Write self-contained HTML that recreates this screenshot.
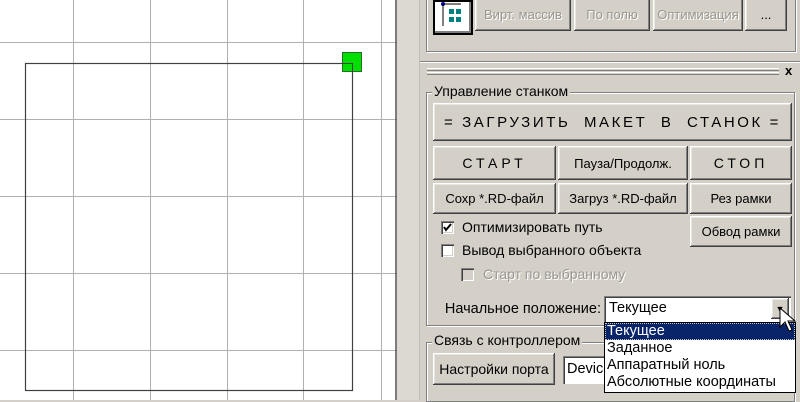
<!DOCTYPE html>
<html><head><meta charset="utf-8"><style>
*{margin:0;padding:0;box-sizing:border-box}
body{width:800px;height:400px;overflow:hidden;background:#d4d0c8;position:relative;font-family:"Liberation Sans","DejaVu Sans",sans-serif;font-size:14px;color:#000}
.a{position:absolute;white-space:nowrap}
.btn{position:absolute;background:#d4d0c8;box-shadow:inset -1px -1px #404040,inset 1px 1px #fff,inset -2px -2px #808080,inset 2px 2px #e8e6e0;display:flex;align-items:center;justify-content:center;white-space:nowrap;font-size:13px}
.dis{color:#9a978f;text-shadow:1px 1px #fff}
.grp{position:absolute;border:1px solid #808080;box-shadow:1px 1px #fff,inset 1px 1px #fff}
.lbl{position:absolute;background:#d4d0c8;padding:0 2px;font-size:14px}
.cb{position:absolute;width:13px;height:13px;background:#fff;box-shadow:inset 1px 1px #808080,inset 2px 2px #404040,inset -1px -1px #fff,inset -2px -2px #d4d0c8}
.sp{letter-spacing:4px;font-size:14px}
.li{position:absolute;left:607px;line-height:17px;font-size:14.5px}
</style></head><body>
<svg class="a" style="left:0;top:0" width="397" height="400">
<rect width="397" height="400" fill="#fff"/>
<g stroke="#b0b0b0" stroke-width="1">
<line x1="73.5" y1="0" x2="73.5" y2="400"/><line x1="150.5" y1="0" x2="150.5" y2="400"/><line x1="227.5" y1="0" x2="227.5" y2="400"/><line x1="303.5" y1="0" x2="303.5" y2="400"/><line x1="381.5" y1="0" x2="381.5" y2="400"/>
<line x1="0" y1="42.5" x2="397" y2="42.5"/><line x1="0" y1="119.5" x2="397" y2="119.5"/><line x1="0" y1="196.5" x2="397" y2="196.5"/><line x1="0" y1="273.5" x2="397" y2="273.5"/><line x1="0" y1="350.5" x2="397" y2="350.5"/>
</g>
<rect x="25.5" y="63.5" width="327" height="327" fill="none" stroke="#404040" stroke-width="1.2"/>
<rect x="342.5" y="52.5" width="19" height="19" fill="#00e000" stroke="#2a6a2a"/>
<line x1="342" y1="63.5" x2="352" y2="63.5" stroke="#404040"/><line x1="352.5" y1="63" x2="352.5" y2="72" stroke="#404040"/>
<line x1="396" y1="0" x2="396" y2="400" stroke="#505050" stroke-width="1.5"/>
</svg>
<div class="a" style="left:397px;top:0;width:23px;height:400px;background:#dcd9d2;border-right:1px solid #c0bdb5"></div>
<div class="grp" style="left:426px;top:-4px;width:370px;height:56px"></div>
<div class="a" style="left:433px;top:0;width:40px;height:35px;background:#fff;border:2px solid #000;box-shadow:inset -2px -2px #808080"></div>
<svg class="a" style="left:439px;top:2px" width="28" height="28"><circle cx="4" cy="2" r="2" fill="#0000c0"/><line x1="4" y1="2" x2="4" y2="24" stroke="#000"/><line x1="4" y1="2" x2="22" y2="2" stroke="#000"/><g fill="#008080"><rect x="10" y="7" width="5" height="5"/><rect x="17" y="7" width="5" height="5"/><rect x="10" y="15" width="5" height="5"/><rect x="17" y="15" width="5" height="5"/></g></svg>
<div class="btn dis" style="left:475px;top:-3px;width:96px;height:34px">Вирт. массив</div>
<div class="btn dis" style="left:574px;top:-3px;width:76px;height:34px">По полю</div>
<div class="btn dis" style="left:653px;top:-3px;width:90px;height:34px;overflow:hidden">Оптимизация</div>
<div class="btn" style="left:745px;top:-3px;width:42px;height:34px">...</div>
<div class="a" style="left:420px;top:61px;width:380px;height:1px;background:#808080;box-shadow:0 1px #fff"></div>
<div class="a" style="left:427px;top:68px;width:352px;height:3px;border-top:1px solid #fff;border-bottom:1px solid #808080"></div>
<div class="a" style="left:427px;top:72px;width:352px;height:3px;border-top:1px solid #fff;border-bottom:1px solid #808080"></div>
<div class="a" style="left:785px;top:63px;font-weight:bold;font-size:13px">x</div>
<div class="grp" style="left:426px;top:92px;width:369px;height:234px"></div>
<div class="lbl" style="left:432px;top:83px">Управление станком</div>
<div class="btn" style="left:433px;top:103px;width:359px;height:38px;font-size:15px;letter-spacing:2.6px">=&nbsp;ЗАГРУЗИТЬ&nbsp; МАКЕТ&nbsp; В&nbsp; СТАНОК&nbsp;=</div>
<div class="btn sp" style="left:433px;top:146px;width:123px;height:34px">СТАРТ</div>
<div class="btn" style="left:558px;top:146px;width:130px;height:34px">Пауза/Продолж.</div>
<div class="btn sp" style="left:690px;top:146px;width:102px;height:34px">СТОП</div>
<div class="btn" style="left:433px;top:183px;width:123px;height:31px">Сохр *.RD-файл</div>
<div class="btn" style="left:558px;top:183px;width:130px;height:31px">Загруз *.RD-файл</div>
<div class="btn" style="left:690px;top:183px;width:102px;height:31px">Рез рамки</div>
<div class="btn" style="left:690px;top:216px;width:102px;height:31px">Обвод рамки</div>
<div class="cb" style="left:441px;top:221px"></div>
<svg class="a" style="left:441px;top:221px" width="13" height="13"><path d="M3 6 L5 9 L10 3" fill="none" stroke="#000" stroke-width="2"/></svg>
<div class="a" style="left:462px;top:219px">Оптимизировать путь</div>
<div class="cb" style="left:441px;top:244px"></div>
<div class="a" style="left:462px;top:242px">Вывод выбранного объекта</div>
<div class="cb" style="left:461px;top:268px;background:#d4d0c8"></div>
<div class="a dis" style="left:483px;top:266px">Старт по выбранному</div>
<div class="a" style="right:199px;top:301px;font-size:14.5px">Начальное положение:</div>
<div class="a" style="left:604px;top:296px;width:187px;height:26px;background:#fff;box-shadow:inset 1px 1px #808080,inset 2px 2px #404040,inset -1px -1px #fff"></div>
<div class="a" style="left:609px;top:300px;font-size:14.5px">Текущее</div>
<div class="btn" style="left:771px;top:298px;width:18px;height:21px;font-size:9px">▼</div>
<div class="grp" style="left:426px;top:342px;width:369px;height:60px"></div>
<div class="lbl" style="left:432px;top:332px">Связь с контроллером</div>
<div class="btn" style="left:433px;top:353px;width:122px;height:32px;font-size:14px">Настройки порта</div>
<div class="a" style="left:563px;top:356px;width:60px;height:28px;background:#fff;box-shadow:inset 1px 1px #808080,inset 2px 2px #404040"></div>
<div class="a" style="left:567px;top:361px;font-size:14.5px">Device</div>
<div class="a" style="left:604px;top:322px;width:192px;height:71px;background:#fff;border:1px solid #000"></div>
<div class="a" style="left:605px;top:323px;width:190px;height:17px;background:#0a246a;outline:1px dotted #c0c0c0;outline-offset:-1px"></div>
<div class="li" style="top:323px;color:#fff">Текущее</div>
<div class="li" style="top:340px">Заданное</div>
<div class="li" style="top:357px">Аппаратный ноль</div>
<div class="li" style="top:374px">Абсолютные координаты</div>
<svg class="a" style="left:779px;top:307px" width="20" height="30"><path d="M1 1 L1 20 L6 15 L10 24 L13 23 L9 14 L16 14 Z" fill="#fff" stroke="#000"/></svg>
</body></html>
